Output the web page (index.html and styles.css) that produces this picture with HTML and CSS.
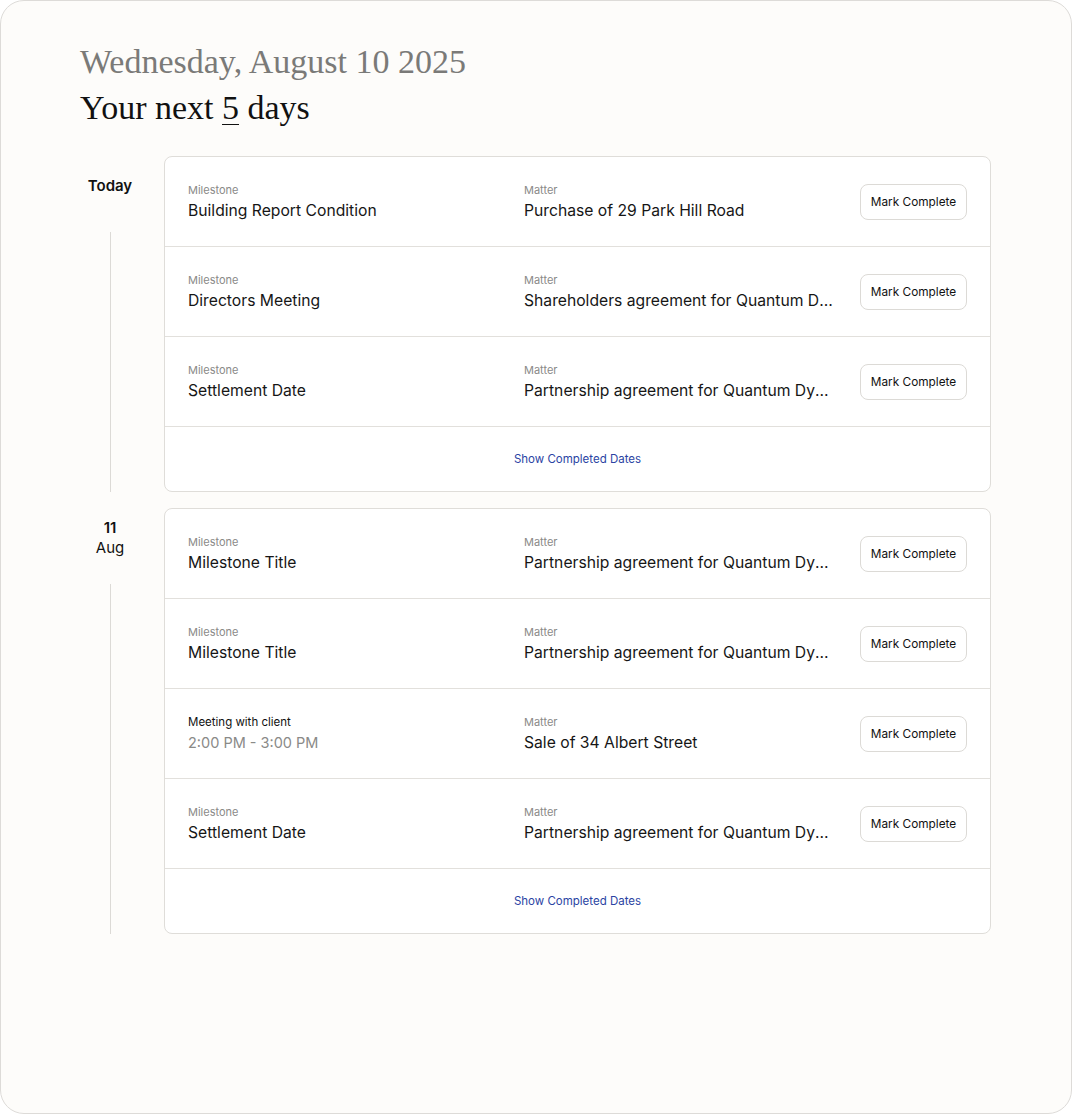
FILE: index.html
```html
<!DOCTYPE html>
<html lang="en">
<head>
<meta charset="utf-8">
<title>Your next 5 days</title>
<link rel="stylesheet" href="styles.css">
</head>
<body>
<div class="frame">
  <header class="head">
    <h1 class="date">Wednesday, August 10 2025</h1>
    <h2 class="title">Your next <span class="num">5</span> days</h2>
  </header>

  <section class="day">
    <div class="day-side">
      <div class="day-label"><strong>Today</strong></div>
      <div class="day-line"></div>
    </div>
    <div class="card">
      <div class="row">
        <div class="cell"><div class="lbl">Milestone</div><div class="val">Building Report Condition</div></div>
        <div class="cell"><div class="lbl">Matter</div><div class="val">Purchase of 29 Park Hill Road</div></div>
        <button class="btn">Mark Complete</button>
      </div>
      <div class="row">
        <div class="cell"><div class="lbl">Milestone</div><div class="val">Directors Meeting</div></div>
        <div class="cell"><div class="lbl">Matter</div><div class="val">Shareholders agreement for Quantum Dynamics Ltd</div></div>
        <button class="btn">Mark Complete</button>
      </div>
      <div class="row">
        <div class="cell"><div class="lbl">Milestone</div><div class="val">Settlement Date</div></div>
        <div class="cell"><div class="lbl">Matter</div><div class="val">Partnership agreement for Quantum Dynamics Ltd</div></div>
        <button class="btn">Mark Complete</button>
      </div>
      <div class="foot"><a class="link" href="#">Show Completed Dates</a></div>
    </div>
  </section>

  <section class="day">
    <div class="day-side">
      <div class="day-label"><strong>11</strong><span>Aug</span></div>
      <div class="day-line"></div>
    </div>
    <div class="card">
      <div class="row">
        <div class="cell"><div class="lbl">Milestone</div><div class="val">Milestone Title</div></div>
        <div class="cell"><div class="lbl">Matter</div><div class="val">Partnership agreement for Quantum Dynamics Ltd</div></div>
        <button class="btn">Mark Complete</button>
      </div>
      <div class="row">
        <div class="cell"><div class="lbl">Milestone</div><div class="val">Milestone Title</div></div>
        <div class="cell"><div class="lbl">Matter</div><div class="val">Partnership agreement for Quantum Dynamics Ltd</div></div>
        <button class="btn">Mark Complete</button>
      </div>
      <div class="row">
        <div class="cell"><div class="lbl dark">Meeting with client</div><div class="val muted">2:00 PM - 3:00 PM</div></div>
        <div class="cell"><div class="lbl">Matter</div><div class="val">Sale of 34 Albert Street</div></div>
        <button class="btn">Mark Complete</button>
      </div>
      <div class="row">
        <div class="cell"><div class="lbl">Milestone</div><div class="val">Settlement Date</div></div>
        <div class="cell"><div class="lbl">Matter</div><div class="val">Partnership agreement for Quantum Dynamics Ltd</div></div>
        <button class="btn">Mark Complete</button>
      </div>
      <div class="foot"><a class="link" href="#">Show Completed Dates</a></div>
    </div>
  </section>
</div>
</body>
</html>
```

FILE: styles.css
```css
* { box-sizing: border-box; }
html, body { margin: 0; padding: 0; background: #ffffff; }
body {
  font-family: Inter, "Noto Sans", sans-serif;
  color: #1a1a1a;
}
.frame {
  width: 1072px;
  height: 1114px;
  border: 1px solid #dddbd8;
  border-radius: 24px;
  background: #fdfcfa;
  padding: 40px 80px 0 79px;
}
.head { margin-bottom: 27px; }
.date {
  margin: 0;
  font-family: "Liberation Serif", serif;
  font-weight: 400;
  font-size: 34px;
  line-height: 42px;
  color: #7a7a78;
}
.title {
  margin: 4px 0 0;
  font-family: "Liberation Serif", serif;
  font-weight: 400;
  font-size: 34px;
  line-height: 42px;
  color: #111;
}
.num {
  text-decoration: underline;
  text-decoration-thickness: 1px;
  text-underline-offset: 5px;
}
.day {
  display: flex;
  gap: 24px;
  margin-bottom: 16px;
}
.day-side {
  width: 60px;
  flex: none;
  display: flex;
  flex-direction: column;
  align-items: center;
}
.day-label {
  height: 60px;
  display: flex;
  flex-direction: column;
  align-items: center;
  justify-content: center;
  font-size: 15px;
  line-height: 20px;
  color: #111;
}
.day-label strong { font-weight: 600; }
.day-label span { font-weight: 400; }
.day-line {
  flex: 1;
  width: 1px;
  margin-top: 16px;
  background: #dcdad6;
}
.card {
  flex: 1;
  background: #fff;
  border: 1px solid #dfddd9;
  border-radius: 8px;
  overflow: hidden;
}
.row {
  height: 90px;
  display: grid;
  grid-template-columns: 1fr 1fr auto;
  column-gap: 24px;
  align-items: center;
  padding: 0 23px 0 23px;
  border-bottom: 1px solid #e2e0dc;
}
.cell { min-width: 0; }
.lbl {
  font-size: 11px;
  line-height: 16px;
  color: #8a8a88;
}
.lbl.dark { color: #111; font-size: 11.5px; }
.val {
  font-size: 15.7px;
  line-height: 22px;
  margin-top: 2px;
  color: #161616;
  white-space: nowrap;
  overflow: hidden;
  text-overflow: ellipsis;
}
.val.muted { color: #8a8a88; font-size: 14.5px; }
.btn {
  width: 107px;
  height: 36px;
  padding: 0;
  font-family: inherit;
  font-size: 11.8px;
  color: #111;
  background: #fff;
  border: 1px solid #dcdad6;
  border-radius: 8px;
}
.foot {
  height: 64px;
  display: flex;
  align-items: center;
  justify-content: center;
}
.link {
  font-size: 11.5px;
  color: #2b44a3;
  text-decoration: none;
}
```
